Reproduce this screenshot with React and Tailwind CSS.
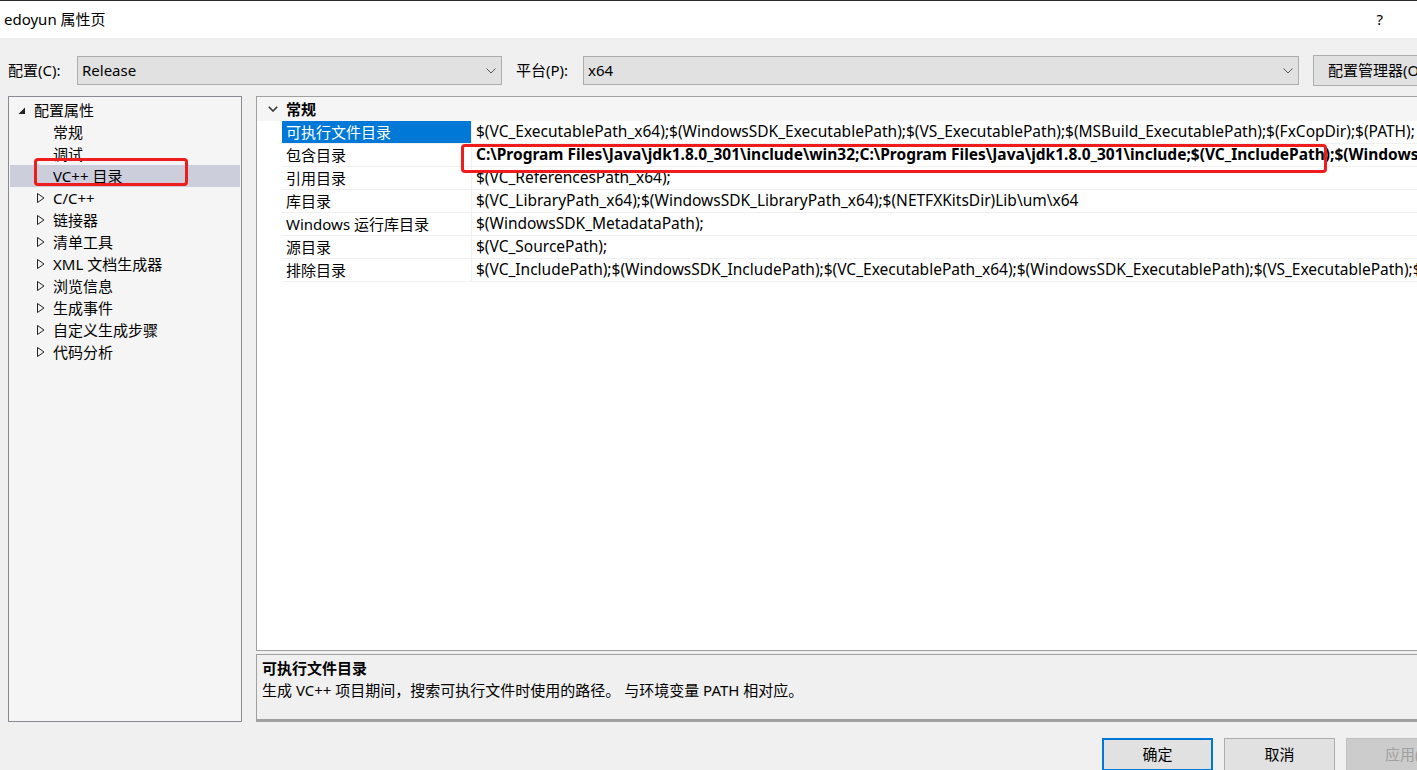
import React from "react";

const FONT = { fontFamily: '"Noto Sans", "Noto Sans CJK SC", sans-serif' };

function SelChevron() {
  return (
    <svg width="10" height="6" viewBox="0 0 10 6" className="shrink-0">
      <path d="M0.5 0.5 L5 5 L9.5 0.5" fill="none" stroke="#555" strokeWidth="1" />
    </svg>
  );
}

function Select({ value, className }) {
  return (
    <div
      className={
        "h-[29px] shrink-0 border border-[#adadad] bg-[#e1e1e1] flex items-center justify-between pl-[4px] pr-[5px] text-[15px] text-black " +
        className
      }
    >
      <span>{value}</span>
      <SelChevron />
    </div>
  );
}

function Expander() {
  return (
    <svg width="8" height="10" viewBox="0 0 8 10" className="shrink-0">
      <path d="M0.5 0.5 L7 5 L0.5 9.5 Z" fill="none" stroke="#222" strokeWidth="1" />
    </svg>
  );
}

function Expanded() {
  return (
    <svg width="8" height="8" viewBox="0 0 8 8" className="shrink-0">
      <path d="M7 0.5 L7 7 L0.5 7 Z" fill="#222" />
    </svg>
  );
}

const treeItems = [
  { label: "常规" },
  { label: "调试" },
  { label: "VC++ 目录", selected: true },
  { label: "C/C++", exp: true },
  { label: "链接器", exp: true },
  { label: "清单工具", exp: true },
  { label: "XML 文档生成器", exp: true },
  { label: "浏览信息", exp: true },
  { label: "生成事件", exp: true },
  { label: "自定义生成步骤", exp: true },
  { label: "代码分析", exp: true },
];

const rows = [
  {
    name: "可执行文件目录",
    value:
      "$(VC_ExecutablePath_x64);$(WindowsSDK_ExecutablePath);$(VS_ExecutablePath);$(MSBuild_ExecutablePath);$(FxCopDir);$(PATH);",
    selected: true,
  },
  {
    name: "包含目录",
    value:
      "C:\\Program Files\\Java\\jdk1.8.0_301\\include\\win32;C:\\Program Files\\Java\\jdk1.8.0_301\\include;$(VC_IncludePath);$(WindowsSDK_IncludePath);",
    bold: true,
  },
  { name: "引用目录", value: "$(VC_ReferencesPath_x64);" },
  {
    name: "库目录",
    value: "$(VC_LibraryPath_x64);$(WindowsSDK_LibraryPath_x64);$(NETFXKitsDir)Lib\\um\\x64",
  },
  { name: "Windows 运行库目录", value: "$(WindowsSDK_MetadataPath);" },
  { name: "源目录", value: "$(VC_SourcePath);" },
  {
    name: "排除目录",
    value:
      "$(VC_IncludePath);$(WindowsSDK_IncludePath);$(VC_ExecutablePath_x64);$(WindowsSDK_ExecutablePath);$(VS_ExecutablePath);$(MSBuild_ExecutablePath);",
  },
];

export default function App() {
  return (
    <div
      style={FONT}
      className="w-[1417px] h-[770px] bg-[#f0f0f0] overflow-hidden flex flex-col text-black"
    >
      {/* Title bar */}
      <div className="h-[38px] shrink-0 bg-white border-t border-[#2b2b2b] flex items-center justify-between">
        <span className="pl-[4px] text-[15px] leading-none">edoyun 属性页</span>
        <span className="pr-[34px] text-[15px] leading-none">?</span>
      </div>

      {/* Configuration row */}
      <div className="mt-[17px] h-[31px] shrink-0 flex items-center whitespace-nowrap overflow-hidden">
        <span className="shrink-0 pl-[8px] w-[77px] text-[15px]">配置(C):</span>
        <Select value="Release" className="w-[425px]" />
        <span className="shrink-0 ml-[14px] w-[67px] text-[15px]">平台(P):</span>
        <Select value="x64" className="w-[716px]" />
        <div className="ml-[14px] h-[31px] w-[120px] shrink-0 border border-[#adadad] bg-[#e1e1e1] flex items-center pl-[14px] text-[15px] overflow-hidden">
          配置管理器(O)...
        </div>
      </div>

      {/* Main area */}
      <div className="mt-[10px] h-[626px] shrink-0 flex">
        {/* Tree */}
        <div className="relative ml-[8px] w-[234px] shrink-0 border border-[#898a93] bg-[#f5f5f5] pt-[2px] pl-[1px] pr-[1px]">
          <div className="h-[22px] flex items-center text-[15px] whitespace-nowrap">
            <span className="w-[24px] flex justify-end pr-[8px] pt-[1px]">
              <Expanded />
            </span>
            <span>配置属性</span>
          </div>
          {treeItems.map((it) => (
            <div
              key={it.label}
              className={
                "h-[22px] flex items-center text-[15px] whitespace-nowrap " +
                (it.selected ? "bg-[#cccedb]" : "")
              }
            >
              <span className="w-[43px] flex justify-end pr-[8px]">
                {it.exp ? <Expander /> : null}
              </span>
              <span>{it.label}</span>
            </div>
          ))}
          {/* annotation */}
          <div className="absolute left-[25px] top-[61px] w-[154px] h-[28px] border-[3px] border-[#ee1c1c] rounded-[4px]" />
        </div>

        {/* Right column */}
        <div className="ml-[14px] flex-1 mr-[-4px] flex flex-col min-w-0">
          <div className="relative h-[555px] shrink-0 border border-[#a0a0a0] bg-white overflow-hidden">
            <div className="h-[24px] bg-[#f5f5f5] flex items-center whitespace-nowrap">
              <span className="w-[29px] flex justify-center pl-[2px]">
                <svg width="10" height="6" viewBox="0 0 10 6">
                  <path d="M0.8 0.8 L5 5 L9.2 0.8" fill="none" stroke="#333" strokeWidth="1.6" />
                </svg>
              </span>
              <span className="font-bold text-[15px]">常规</span>
            </div>
            {rows.map((r) => (
              <div key={r.name} className="h-[23px] flex whitespace-nowrap">
                <div className="w-[25px] shrink-0 bg-white" />
                <div
                  className={
                    "w-[189px] shrink-0 flex items-center pl-[4px] text-[15px] border-b border-[#f0f0f0] " +
                    (r.selected ? "bg-[#0078d7] text-white border-[#0078d7]" : "")
                  }
                >
                  {r.name}
                </div>
                <div
                  className={
                    "flex-1 min-w-0 flex items-center pl-[4px] text-[15.5px] border-b border-l border-[#f0f0f0] overflow-hidden " +
                    (r.bold ? "font-bold" : "")
                  }
                >
                  {r.value}
                </div>
              </div>
            ))}
            {/* annotation */}
            <div className="absolute left-[204px] top-[47px] w-[866px] h-[29px] border-[3px] border-[#ee1c1c] rounded-[4px]" />
          </div>
          <div className="mt-[3px] h-[68px] shrink-0 border border-[#a0a0a0] border-b-[3px] bg-[#f0f0f0] px-[5px] pt-[2px] whitespace-nowrap">
            <div className="font-bold text-[15px] leading-[22px]">可执行文件目录</div>
            <div className="text-[15px] leading-[22px]">
              生成 VC++ 项目期间，搜索可执行文件时使用的路径。 与环境变量 PATH 相对应。
            </div>
          </div>
        </div>
      </div>

      {/* Buttons */}
      <div className="mt-[16px] flex whitespace-nowrap">
        <div className="ml-[1102px] w-[111px] h-[33px] shrink-0 border-2 border-[#0078d7] bg-[#e1e1e1] flex items-center justify-center text-[15px]">
          确定
        </div>
        <div className="ml-[11px] w-[111px] h-[33px] shrink-0 border border-[#adadad] bg-[#e1e1e1] flex items-center justify-center text-[15px]">
          取消
        </div>
        <div className="ml-[11px] w-[111px] h-[33px] shrink-0 border border-[#bfbfbf] bg-[#cccccc] flex items-center pl-[38px] text-[15px] text-[#a0a0a0]">
          应用(A)
        </div>
      </div>
    </div>
  );
}
